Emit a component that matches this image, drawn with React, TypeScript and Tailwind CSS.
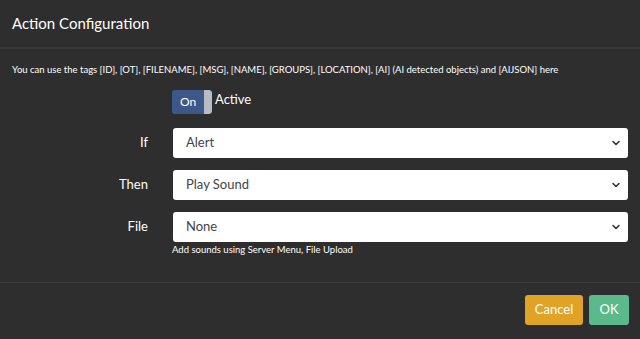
import React from 'react'

const Chevron = () => (
  <svg width="10" height="10" viewBox="0 0 10 10" className="absolute right-[7px] top-1/2 -translate-y-1/2">
    <path d="M2 3.5 L5 6.5 L8 3.5" fill="none" stroke="#333" strokeWidth="1.6" strokeLinecap="round" strokeLinejoin="round" />
  </svg>
)

const SelectBox = ({ value }: { value: string }) => (
  <div className="relative h-[30px] bg-white rounded-[3px] flex items-center pl-[13px] text-[13px] text-[#444]">
    {value}
    <Chevron />
  </div>
)

const Row = ({ label, value, help }: { label: string; value: string; help?: string }) => (
  <div className="flex">
    <div className="w-[148px] shrink-0 text-right text-[13px] text-white h-[30px] flex items-center justify-end">{label}</div>
    <div className="flex-1 pl-[25px] pr-[12px]">
      <SelectBox value={value} />
      {help && <div className="text-[9.5px] text-white mt-[1px] -ml-[1px]">{help}</div>}
    </div>
  </div>
)

export default function App() {
  return (
    <div className="w-[640px] h-[339px] bg-[#2e2e2e] text-white overflow-hidden" style={{ fontFamily: 'Lato, "Open Sans", sans-serif' }}>
      <div className="h-[49px] flex items-center px-[12px] border-b-2 border-[#383838]">
        <h1 className="text-[15px] leading-none">Action Configuration</h1>
      </div>
      <div className="border-b border-[#3c3c3c] h-[234px]">
        <p className="text-[9.5px] px-[12px] pt-[14px] leading-[14px]">
          You can use the tags [ID], [OT], [FILENAME], [MSG], [NAME], [GROUPS], [LOCATION], [AI] (AI detected objects) and [AIJSON] here
        </p>
        <div className="flex items-center pl-[172px] mt-[13px]">
          <div className="w-[40px] h-[24px] rounded-[3px] bg-[#3d5788] flex items-center overflow-hidden">
            <span className="flex-1 text-center text-[12px] text-white">On</span>
            <span className="w-[8px] h-full bg-[#b9bcc2] rounded-r-[3px]"></span>
          </div>
          <span className="ml-[3px] text-[13px] -mt-[4px]">Active</span>
        </div>
        <div className="flex flex-col gap-[12px] mt-[14px]">
          <Row label="If" value="Alert" />
          <Row label="Then" value="Play Sound" />
          <Row label="File" value="None" help="Add sounds using Server Menu, File Upload" />
        </div>
      </div>
      <div className="flex justify-end gap-[6px] pr-[11px] pt-[12px]">
        <button className="w-[58px] h-[30px] rounded-[3px] bg-[#e0a325] text-white text-[13px]">Cancel</button>
        <button className="w-[40px] h-[30px] rounded-[3px] bg-[#5cb98b] text-white text-[13px]">OK</button>
      </div>
    </div>
  )
}
